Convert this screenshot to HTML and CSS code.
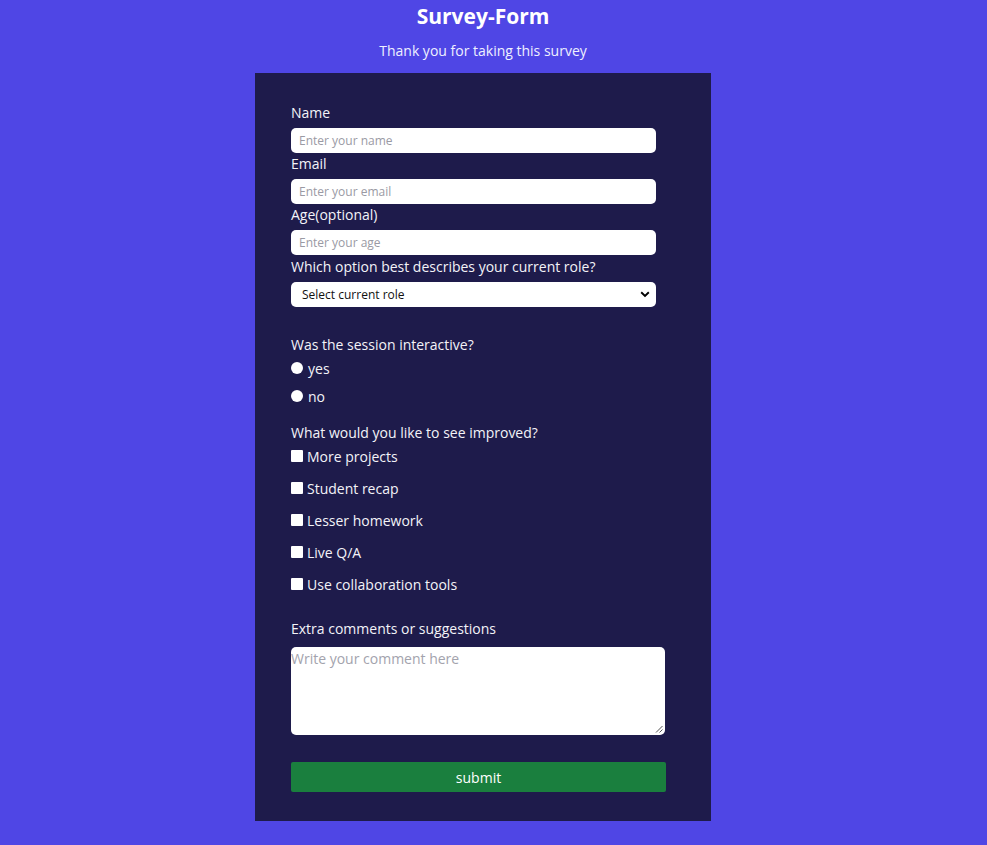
FILE: index.html
```html
<!DOCTYPE html>
<html lang="en">
<head>
<meta charset="utf-8">
<title>Survey-Form</title>
<link rel="stylesheet" href="styles.css">
</head>
<body>
<div class="page">
<header class="head">
  <h1 class="title">Survey-Form</h1>
  <p class="subtitle">Thank you for taking this survey</p>
</header>
<form class="card">
  <label class="lbl" for="name">Name</label>
  <input class="field" id="name" type="text" placeholder="Enter your name">
  <label class="lbl" for="email">Email</label>
  <input class="field" id="email" type="email" placeholder="Enter your email">
  <label class="lbl" for="age">Age(optional)</label>
  <input class="field" id="age" type="number" placeholder="Enter your age">
  <label class="lbl lbl-q" for="role">Which option best describes your current role?</label>
  <div class="select">
    <span>Select current role</span>
    <svg class="chev" width="10" height="7" viewBox="0 0 10 7"><path d="M1.2 1.3 L5 5 L8.8 1.3" fill="none" stroke="#000" stroke-width="1.9"/></svg>
  </div>

  <p class="q q-first">Was the session interactive?</p>
  <div class="opts opts-radio">
    <label class="opt"><span class="radio"></span>yes</label>
    <label class="opt"><span class="radio"></span>no</label>
  </div>

  <p class="q q-second">What would you like to see improved?</p>
  <div class="opts opts-check">
    <label class="opt"><span class="check"></span>More projects</label>
    <label class="opt"><span class="check"></span>Student recap</label>
    <label class="opt"><span class="check"></span>Lesser homework</label>
    <label class="opt"><span class="check"></span>Live Q/A</label>
    <label class="opt"><span class="check"></span>Use collaboration tools</label>
  </div>

  <p class="q q-third">Extra comments or suggestions</p>
  <div class="comment">
    <span class="ph">Write your comment here</span>
    <svg class="grip" width="8" height="8" viewBox="0 0 8 8"><path d="M7.5 1 L1 7.5 M7.5 4.5 L4.5 7.5" stroke="#555" stroke-width="1"/></svg>
  </div>

  <button class="submit" type="button">submit</button>
</form>
</div>
</body>
</html>
```
FILE: styles.css
```css
* { box-sizing: border-box; }
html, body { margin: 0; padding: 0; }
body {
  background: #4f46e5;
  font-family: "Open Sans", "Noto Sans", sans-serif;
  color: #f3f3f8;
  min-height: 845px;
}
.page {
  width: 966px;
}
.head {
  display: flex;
  flex-direction: column;
  align-items: center;
}
.title {
  margin: 2px 0 0;
  font-size: 21px;
  line-height: 28px;
  font-weight: 700;
  color: #ffffff;
}
.subtitle {
  margin: 11px 0 0;
  font-size: 14px;
  line-height: 20px;
  color: #eef0ff;
}
.card {
  width: 456px;
  margin: 12px auto 0;
  background: #1e1b4b;
  padding: 30px 36px 29px;
  display: flex;
  flex-direction: column;
  align-items: flex-start;
}
.lbl {
  font-size: 14px;
  line-height: 20px;
  height: 20px;
  margin-bottom: 5px;
}
.field {
  width: 365px;
  height: 25px;
  border: none;
  border-radius: 5px;
  background: #fff;
  padding: 0 8px;
  font-family: inherit;
  font-size: 12px;
  margin-bottom: 1px;
  outline: none;
}
.field::placeholder { color: #9a9aa4; }
.lbl-q { margin-top: 1px; }
.select {
  width: 365px;
  height: 25px;
  border-radius: 5px;
  background: #fff;
  color: #111;
  font-size: 12px;
  padding: 0 6px 0 11px;
  display: flex;
  align-items: center;
  justify-content: space-between;
}
.q {
  margin: 0;
  font-size: 14px;
  line-height: 20px;
}
.q-first { margin-top: 28px; }
.q-second { margin-top: 16px; }
.q-third { margin-top: 24px; }
.opts {
  display: flex;
  flex-direction: column;
}
.opts-radio { margin-top: 4px; gap: 8px; }
.opts-check { margin-top: 4px; gap: 12px; }
.opt {
  display: flex;
  align-items: center;
  font-size: 14px;
  line-height: 20px;
  height: 20px;
}
.radio {
  width: 12px;
  height: 12px;
  border-radius: 50%;
  background: #fff;
  margin: -3px 5px 0 0;
}
.check {
  width: 12px;
  height: 12px;
  border-radius: 1px;
  background: #fff;
  margin: -3px 4px 0 0;
}
.comment {
  position: relative;
  margin-top: 8px;
  width: 374px;
  height: 88px;
  background: #fff;
  border-radius: 5px;
  font-size: 14px;
  line-height: 24px;
}
.ph { color: #a3a3ad; }
.grip {
  position: absolute;
  right: 2px;
  bottom: 2px;
}
.submit {
  margin-top: 27px;
  width: 375px;
  height: 30px;
  border: none;
  border-radius: 2px;
  background: #1a7f3e;
  color: #fff;
  font-family: inherit;
  font-size: 14px;
  cursor: pointer;
}
```
